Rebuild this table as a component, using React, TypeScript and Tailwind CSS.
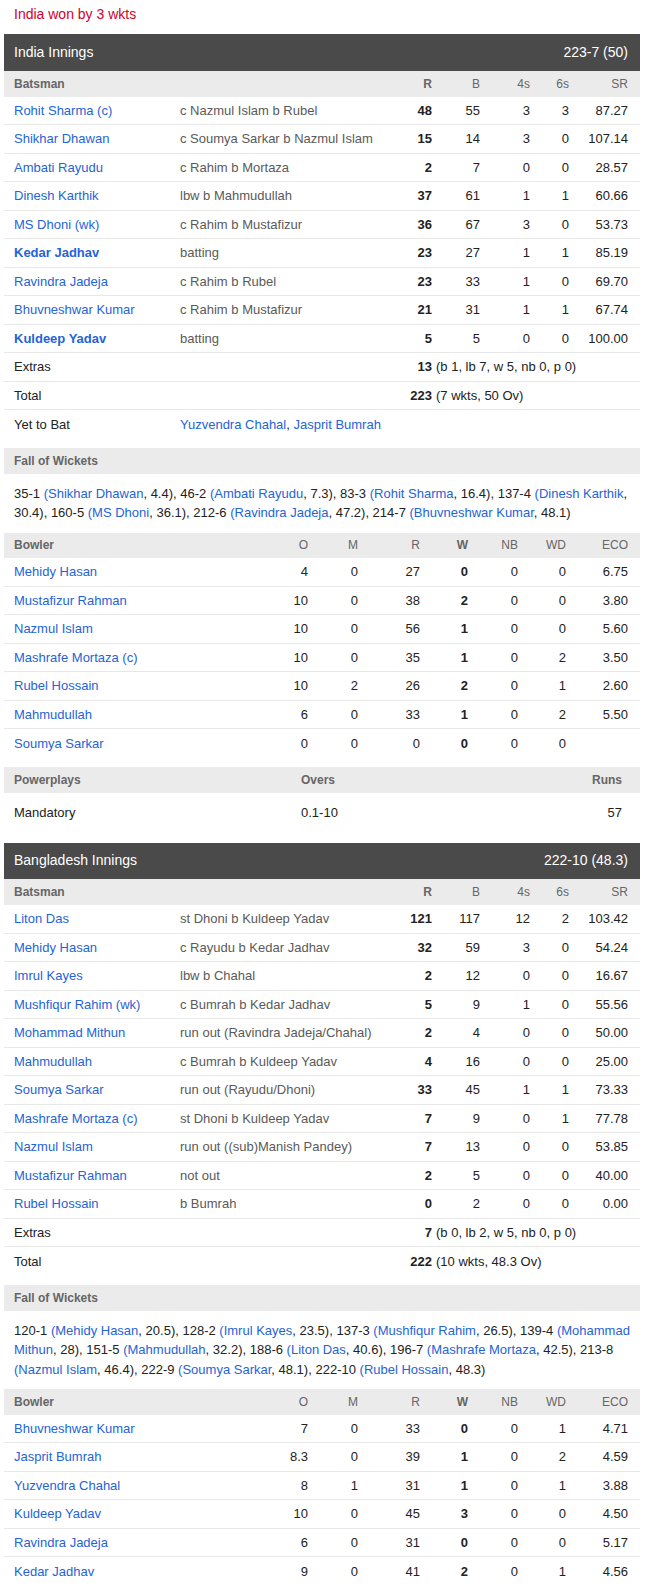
import React from 'react';

type Bat = { name: string; how: string; r: string; b: string; f: string; s: string; sr: string; bold?: boolean };
type Bowl = { name: string; o: string; m: string; r: string; w: string; nb: string; wd: string; eco: string };
type Fow = { score: string; name: string; over: string };

const indiaBat: Bat[] = [
  { name: "Rohit Sharma (c)", how: "c Nazmul Islam b Rubel", r: "48", b: "55", f: "3", s: "3", sr: "87.27" },
  { name: "Shikhar Dhawan", how: "c Soumya Sarkar b Nazmul Islam", r: "15", b: "14", f: "3", s: "0", sr: "107.14" },
  { name: "Ambati Rayudu", how: "c Rahim b Mortaza", r: "2", b: "7", f: "0", s: "0", sr: "28.57" },
  { name: "Dinesh Karthik", how: "lbw b Mahmudullah", r: "37", b: "61", f: "1", s: "1", sr: "60.66" },
  { name: "MS Dhoni (wk)", how: "c Rahim b Mustafizur", r: "36", b: "67", f: "3", s: "0", sr: "53.73" },
  { name: "Kedar Jadhav", how: "batting", r: "23", b: "27", f: "1", s: "1", sr: "85.19", bold: true },
  { name: "Ravindra Jadeja", how: "c Rahim b Rubel", r: "23", b: "33", f: "1", s: "0", sr: "69.70" },
  { name: "Bhuvneshwar Kumar", how: "c Rahim b Mustafizur", r: "21", b: "31", f: "1", s: "1", sr: "67.74" },
  { name: "Kuldeep Yadav", how: "batting", r: "5", b: "5", f: "0", s: "0", sr: "100.00", bold: true },
];

const bdBat: Bat[] = [
  { name: "Liton Das", how: "st Dhoni b Kuldeep Yadav", r: "121", b: "117", f: "12", s: "2", sr: "103.42" },
  { name: "Mehidy Hasan", how: "c Rayudu b Kedar Jadhav", r: "32", b: "59", f: "3", s: "0", sr: "54.24" },
  { name: "Imrul Kayes", how: "lbw b Chahal", r: "2", b: "12", f: "0", s: "0", sr: "16.67" },
  { name: "Mushfiqur Rahim (wk)", how: "c Bumrah b Kedar Jadhav", r: "5", b: "9", f: "1", s: "0", sr: "55.56" },
  { name: "Mohammad Mithun", how: "run out (Ravindra Jadeja/Chahal)", r: "2", b: "4", f: "0", s: "0", sr: "50.00" },
  { name: "Mahmudullah", how: "c Bumrah b Kuldeep Yadav", r: "4", b: "16", f: "0", s: "0", sr: "25.00" },
  { name: "Soumya Sarkar", how: "run out (Rayudu/Dhoni)", r: "33", b: "45", f: "1", s: "1", sr: "73.33" },
  { name: "Mashrafe Mortaza (c)", how: "st Dhoni b Kuldeep Yadav", r: "7", b: "9", f: "0", s: "1", sr: "77.78" },
  { name: "Nazmul Islam", how: "run out ((sub)Manish Pandey)", r: "7", b: "13", f: "0", s: "0", sr: "53.85" },
  { name: "Mustafizur Rahman", how: "not out", r: "2", b: "5", f: "0", s: "0", sr: "40.00" },
  { name: "Rubel Hossain", how: "b Bumrah", r: "0", b: "2", f: "0", s: "0", sr: "0.00" },
];

const bdBowl: Bowl[] = [
  { name: "Mehidy Hasan", o: "4", m: "0", r: "27", w: "0", nb: "0", wd: "0", eco: "6.75" },
  { name: "Mustafizur Rahman", o: "10", m: "0", r: "38", w: "2", nb: "0", wd: "0", eco: "3.80" },
  { name: "Nazmul Islam", o: "10", m: "0", r: "56", w: "1", nb: "0", wd: "0", eco: "5.60" },
  { name: "Mashrafe Mortaza (c)", o: "10", m: "0", r: "35", w: "1", nb: "0", wd: "2", eco: "3.50" },
  { name: "Rubel Hossain", o: "10", m: "2", r: "26", w: "2", nb: "0", wd: "1", eco: "2.60" },
  { name: "Mahmudullah", o: "6", m: "0", r: "33", w: "1", nb: "0", wd: "2", eco: "5.50" },
  { name: "Soumya Sarkar", o: "0", m: "0", r: "0", w: "0", nb: "0", wd: "0", eco: "" },
];

const indiaBowl: Bowl[] = [
  { name: "Bhuvneshwar Kumar", o: "7", m: "0", r: "33", w: "0", nb: "0", wd: "1", eco: "4.71" },
  { name: "Jasprit Bumrah", o: "8.3", m: "0", r: "39", w: "1", nb: "0", wd: "2", eco: "4.59" },
  { name: "Yuzvendra Chahal", o: "8", m: "1", r: "31", w: "1", nb: "0", wd: "1", eco: "3.88" },
  { name: "Kuldeep Yadav", o: "10", m: "0", r: "45", w: "3", nb: "0", wd: "0", eco: "4.50" },
  { name: "Ravindra Jadeja", o: "6", m: "0", r: "31", w: "0", nb: "0", wd: "0", eco: "5.17" },
  { name: "Kedar Jadhav", o: "9", m: "0", r: "41", w: "2", nb: "0", wd: "1", eco: "4.56" },
];

const indiaFow: Fow[] = [
  { score: "35-1", name: "Shikhar Dhawan", over: "4.4" },
  { score: "46-2", name: "Ambati Rayudu", over: "7.3" },
  { score: "83-3", name: "Rohit Sharma", over: "16.4" },
  { score: "137-4", name: "Dinesh Karthik", over: "30.4" },
  { score: "160-5", name: "MS Dhoni", over: "36.1" },
  { score: "212-6", name: "Ravindra Jadeja", over: "47.2" },
  { score: "214-7", name: "Bhuvneshwar Kumar", over: "48.1" },
];

const bdFow: Fow[] = [
  { score: "120-1", name: "Mehidy Hasan", over: "20.5" },
  { score: "128-2", name: "Imrul Kayes", over: "23.5" },
  { score: "137-3", name: "Mushfiqur Rahim", over: "26.5" },
  { score: "139-4", name: "Mohammad Mithun", over: "28" },
  { score: "151-5", name: "Mahmudullah", over: "32.2" },
  { score: "188-6", name: "Liton Das", over: "40.6" },
  { score: "196-7", name: "Mashrafe Mortaza", over: "42.5" },
  { score: "213-8", name: "Nazmul Islam", over: "46.4" },
  { score: "222-9", name: "Soumya Sarkar", over: "48.1" },
  { score: "222-10", name: "Rubel Hossain", over: "48.3" },
];

const rowCls = "h-[28.5px] flex items-center text-[13px] text-[#222]";
const bandCls = "h-[25.5px] flex items-center bg-[#ebebeb] text-[12px] text-[#666]";

const InningsHeader = ({ title, score }: { title: string; score: string }) => (
  <div className="h-[36.5px] flex items-center justify-between bg-[#4a4a4a] text-white text-[14px] pl-[10px] pr-[12px]">
    <span>{title}</span>
    <span>{score}</span>
  </div>
);

const Batting = ({ rows, extras, extrasInfo, total, totalInfo, yetToBat }: {
  rows: Bat[]; extras: string; extrasInfo: string; total: string; totalInfo: string; yetToBat?: string[];
}) => (
  <div>
    <div className="h-[26px] flex items-center bg-[#ebebeb] text-[12px] text-[#666]">
      <div className="w-[176px] pl-[10px] font-bold">Batsman</div>
      <div className="w-[212px]"></div>
      <div className="w-[40px] text-right font-bold">R</div>
      <div className="w-[48px] text-right">B</div>
      <div className="w-[50px] text-right">4s</div>
      <div className="w-[39px] text-right">6s</div>
      <div className="w-[59px] text-right">SR</div>
    </div>
    {rows.map((p) => (
      <div key={p.name} className={`${rowCls} border-b border-[#e8e8e8]`}>
        <div className={`w-[176px] pl-[10px] text-[#2563d8] ${p.bold ? 'font-bold' : ''}`}>{p.name}</div>
        <div className="w-[212px] text-[#5a5a5a] whitespace-nowrap">{p.how}</div>
        <div className="w-[40px] text-right font-bold">{p.r}</div>
        <div className="w-[48px] text-right">{p.b}</div>
        <div className="w-[50px] text-right">{p.f}</div>
        <div className="w-[39px] text-right">{p.s}</div>
        <div className="w-[59px] text-right">{p.sr}</div>
      </div>
    ))}
    <div className={`${rowCls} border-b border-[#e8e8e8]`}>
      <div className="w-[176px] pl-[10px]">Extras</div>
      <div className="w-[212px]"></div>
      <div className="w-[40px] text-right font-bold">{extras}</div>
      <div className="pl-[4px] whitespace-nowrap">{extrasInfo}</div>
    </div>
    <div className={`${rowCls} ${yetToBat ? 'border-b border-[#e8e8e8]' : ''}`}>
      <div className="w-[176px] pl-[10px]">Total</div>
      <div className="w-[212px]"></div>
      <div className="w-[40px] text-right font-bold">{total}</div>
      <div className="pl-[4px] whitespace-nowrap">{totalInfo}</div>
    </div>
    {yetToBat && (
      <div className={rowCls}>
        <div className="w-[176px] pl-[10px]">Yet to Bat</div>
        <div>
          {yetToBat.map((n, i) => (
            <React.Fragment key={n}>
              {i > 0 && <span>, </span>}
              <span className="text-[#2563d8]">{n}</span>
            </React.Fragment>
          ))}
        </div>
      </div>
    )}
  </div>
);

const FallOfWickets = ({ items }: { items: Fow[] }) => (
  <div className="mt-[9.5px]">
    <div className={bandCls}>
      <div className="pl-[10px] font-bold">Fall of Wickets</div>
    </div>
    <p className="px-[10px] py-[10px] text-[13px] leading-[19.5px] text-[#222]">
      {items.map((f, i) => (
        <React.Fragment key={f.score}>
          {f.score} <span className="text-[#2563d8]">({f.name}</span>, {f.over}){i < items.length - 1 ? ', ' : ''}
        </React.Fragment>
      ))}
    </p>
  </div>
);

const Bowling = ({ rows }: { rows: Bowl[] }) => (
  <div>
    <div className={bandCls}>
      <div className="w-[254px] pl-[10px] font-bold">Bowler</div>
      <div className="w-[50px] text-right">O</div>
      <div className="w-[50px] text-right">M</div>
      <div className="w-[62px] text-right">R</div>
      <div className="w-[48px] text-right font-bold">W</div>
      <div className="w-[50px] text-right">NB</div>
      <div className="w-[48px] text-right">WD</div>
      <div className="w-[62px] text-right">ECO</div>
    </div>
    {rows.map((b, i) => (
      <div key={b.name} className={`${rowCls} ${i < rows.length - 1 ? 'border-b border-[#e8e8e8]' : ''}`}>
        <div className="w-[254px] pl-[10px] text-[#2563d8]">{b.name}</div>
        <div className="w-[50px] text-right">{b.o}</div>
        <div className="w-[50px] text-right">{b.m}</div>
        <div className="w-[62px] text-right">{b.r}</div>
        <div className="w-[48px] text-right font-bold">{b.w}</div>
        <div className="w-[50px] text-right">{b.nb}</div>
        <div className="w-[48px] text-right">{b.wd}</div>
        <div className="w-[62px] text-right">{b.eco}</div>
      </div>
    ))}
  </div>
);

const Powerplays = () => (
  <div className="mt-[9.5px]">
    <div className={`${bandCls} font-bold`}>
      <div className="w-[297px] pl-[10px]">Powerplays</div>
      <div className="flex-1">Overs</div>
      <div className="pr-[18px]">Runs</div>
    </div>
    <div className="h-[40px] flex items-center text-[13px] text-[#222]">
      <div className="w-[297px] pl-[10px]">Mandatory</div>
      <div className="flex-1">0.1-10</div>
      <div className="pr-[18px]">57</div>
    </div>
  </div>
);

export default function App() {
  return (
    <div className="w-[648px] min-h-[1595px] bg-white pl-[4px] pr-[8px] font-['Liberation_Sans',Arial,sans-serif]">
      <div className="h-[34px] pl-[10px] pt-[5px] text-[14px] leading-[18px] text-[#d4002a]">India won by 3 wkts</div>

      <section className="mb-[10px]">
        <InningsHeader title="India Innings" score="223-7 (50)" />
        <Batting
          rows={indiaBat}
          extras="13"
          extrasInfo="(b 1, lb 7, w 5, nb 0, p 0)"
          total="223"
          totalInfo="(7 wkts, 50 Ov)"
          yetToBat={["Yuzvendra Chahal", "Jasprit Bumrah"]}
        />
        <FallOfWickets items={indiaFow} />
        <Bowling rows={bdBowl} />
        <Powerplays />
      </section>

      <section>
        <InningsHeader title="Bangladesh Innings" score="222-10 (48.3)" />
        <Batting
          rows={bdBat}
          extras="7"
          extrasInfo="(b 0, lb 2, w 5, nb 0, p 0)"
          total="222"
          totalInfo="(10 wkts, 48.3 Ov)"
        />
        <FallOfWickets items={bdFow} />
        <Bowling rows={indiaBowl} />
      </section>
    </div>
  );
}
